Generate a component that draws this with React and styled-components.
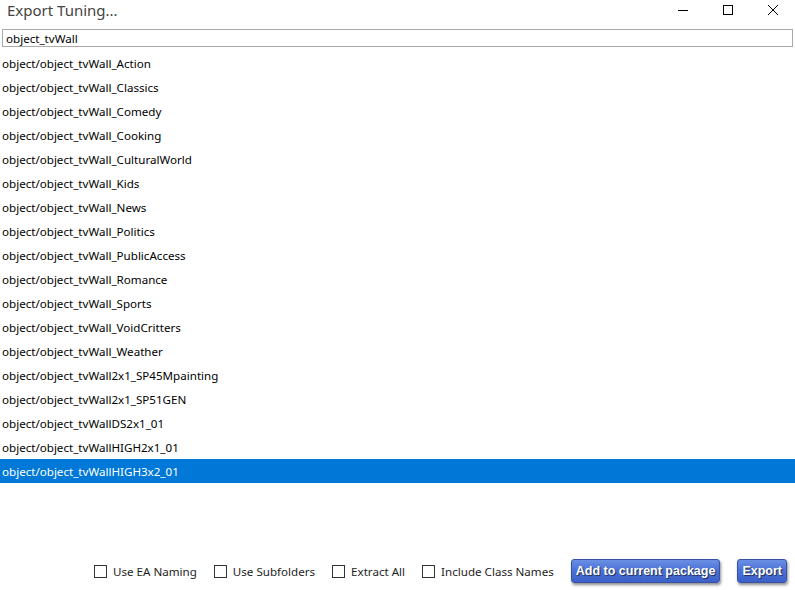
import React, { useState } from "react"
import styled, { createGlobalStyle } from "styled-components"

const GlobalStyle = createGlobalStyle`
  body {
    margin: 0;
    background: #fff;
    font-family: "Noto Sans", "Open Sans", sans-serif;
  }
`

const Window = styled.div`
  width: 795px;
  height: 590px;
  display: flex;
  flex-direction: column;
  background: #fff;
  overflow: hidden;
`

const TitleBar = styled.div`
  height: 28px;
  display: flex;
  align-items: flex-start;
`

const Title = styled.div`
  flex: 1;
  padding: 0 0 0 7px;
  font-size: 15px;
  line-height: 20px;
  color: #444;
`

const Controls = styled.div`
  display: flex;
`

const ControlButton = styled.div`
  width: 45px;
  height: 20px;
  display: flex;
  align-items: center;
  justify-content: center;
`

const SearchBox = styled.input`
  margin: 1px 2px 0;
  height: 18px;
  box-sizing: border-box;
  border: 1px solid #a9a9a9;
  padding: 0 3px;
  font-family: inherit;
  font-size: 11.6px;
  color: #000;
  outline: none;
`

const List = styled.div`
  margin-top: 4px;
  flex: 1;
  display: flex;
  flex-direction: column;
`

const Row = styled.div`
  height: 24px;
  line-height: 25px;
  padding-left: 2px;
  font-size: 11.6px;
  white-space: nowrap;
  color: ${p => (p.selected ? "#fff" : "#000")};
  background: ${p => (p.selected ? "#0078d7" : "transparent")};
`

const Footer = styled.div`
  height: 31px;
  display: flex;
  align-items: flex-start;
  justify-content: flex-end;
  padding: 0 8px 0 0;
`

const CheckLabel = styled.label`
  display: flex;
  align-items: center;
  height: 24px;
  margin-right: 17px;
  font-size: 11.6px;
  color: #1e1e1e;
`

const Box = styled.span`
  width: 13px;
  height: 13px;
  box-sizing: border-box;
  border: 1px solid #333;
  background: #fff;
  margin-right: 6px;
`

const BlueButton = styled.button`
  height: 24px;
  padding: 0 4px;
  margin-left: ${p => p.gap || 0}px;
  border: 1px solid #3552a8;
  border-radius: 3px;
  background: linear-gradient(#6a8fe4, #4a70d6 50%, #3c60c8);
  box-shadow: 1px 2px 3px rgba(0, 0, 0, 0.45);
  color: #fff;
  font-family: "Liberation Sans", Arial, sans-serif;
  font-weight: bold;
  font-size: 12.5px;
  text-shadow: 1px 1px 1px rgba(0, 0, 0, 0.6);
`

const items = [
  "object/object_tvWall_Action",
  "object/object_tvWall_Classics",
  "object/object_tvWall_Comedy",
  "object/object_tvWall_Cooking",
  "object/object_tvWall_CulturalWorld",
  "object/object_tvWall_Kids",
  "object/object_tvWall_News",
  "object/object_tvWall_Politics",
  "object/object_tvWall_PublicAccess",
  "object/object_tvWall_Romance",
  "object/object_tvWall_Sports",
  "object/object_tvWall_VoidCritters",
  "object/object_tvWall_Weather",
  "object/object_tvWall2x1_SP45Mpainting",
  "object/object_tvWall2x1_SP51GEN",
  "object/object_tvWallDS2x1_01",
  "object/object_tvWallHIGH2x1_01",
  "object/object_tvWallHIGH3x2_01",
]

const options = ["Use EA Naming", "Use Subfolders", "Extract All", "Include Class Names"]

const App = () => {
  const [selected, setSelected] = useState(items.length - 1)

  return (
    <Window>
      <GlobalStyle />
      <TitleBar>
        <Title>Export Tuning...</Title>
        <Controls>
          <ControlButton>
            <svg width="12" height="12" viewBox="0 0 12 12">
              <path d="M1 6.5h10" stroke="#000" strokeWidth="1" />
            </svg>
          </ControlButton>
          <ControlButton>
            <svg width="12" height="12" viewBox="0 0 12 12">
              <rect x="1.5" y="1.5" width="9" height="9" fill="none" stroke="#000" strokeWidth="1" />
            </svg>
          </ControlButton>
          <ControlButton>
            <svg width="12" height="12" viewBox="0 0 12 12">
              <path d="M1 1l10 10M11 1L1 11" stroke="#000" strokeWidth="1" />
            </svg>
          </ControlButton>
        </Controls>
      </TitleBar>
      <SearchBox defaultValue="object_tvWall" />
      <List>
        {items.map((item, i) => (
          <Row key={item} selected={i === selected} onClick={() => setSelected(i)}>
            {item}
          </Row>
        ))}
      </List>
      <Footer>
        {options.map(o => (
          <CheckLabel key={o}>
            <Box />
            {o}
          </CheckLabel>
        ))}
        <BlueButton>Add to current package</BlueButton>
        <BlueButton gap={17}>Export</BlueButton>
      </Footer>
    </Window>
  )
}

export default App
